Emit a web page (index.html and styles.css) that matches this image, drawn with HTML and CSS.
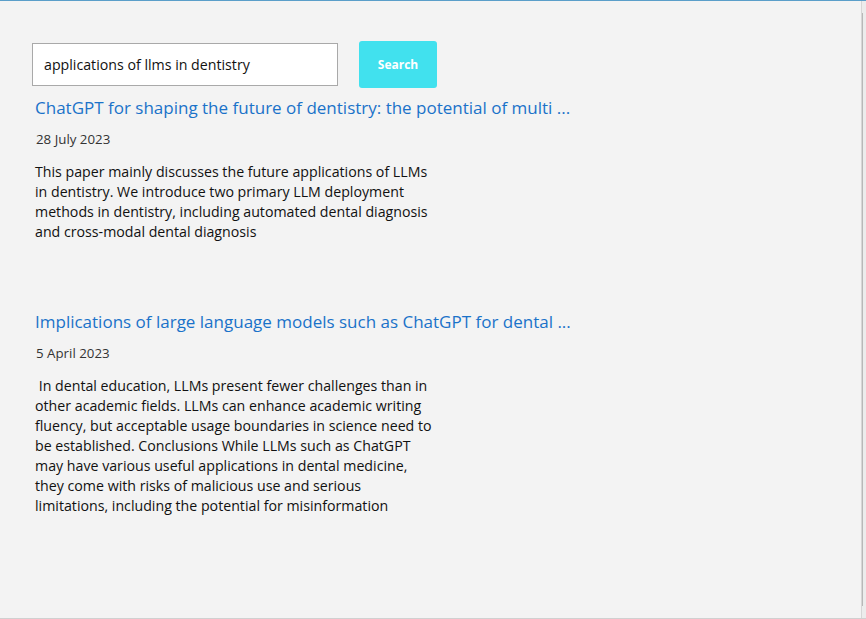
FILE: index.html
```html
<!DOCTYPE html>
<html>
<head>
<meta charset="utf-8">
<link rel="stylesheet" href="styles.css">
</head>
<body>
<div class="window">
  <main class="content">
    <form class="search">
      <input class="search-input" type="text" value="applications of llms in dentistry">
      <button class="search-btn" type="button">Search</button>
    </form>
    <article class="result">
      <a class="title" href="#">ChatGPT for shaping the future of dentistry: the potential of multi ...</a>
      <div class="date">28 July 2023</div>
      <p class="abstract">This paper mainly discusses the future applications of LLMs<br>in dentistry. We introduce two primary LLM deployment<br>methods in dentistry, including automated dental diagnosis<br>and cross-modal dental diagnosis</p>
    </article>
    <article class="result second">
      <a class="title" href="#">Implications of large language models such as ChatGPT for dental ...</a>
      <div class="date">5 April 2023</div>
      <p class="abstract">&nbsp;In dental education, LLMs present fewer challenges than in<br>other academic fields. LLMs can enhance academic writing<br>fluency, but acceptable usage boundaries in science need to<br>be established. Conclusions While LLMs such as ChatGPT<br>may have various useful applications in dental medicine,<br>they come with risks of malicious use and serious<br>limitations, including the potential for misinformation</p>
    </article>
  </main>
  <div class="scrollbar"><div class="thumb"></div></div>
</div>
</body>
</html>
```
FILE: styles.css
```css
* { box-sizing: border-box; }
html, body { margin: 0; padding: 0; height: 100%; }
body {
  background: #f3f3f3;
  font-family: "Open Sans", "Noto Sans", sans-serif;
  color: #222;
}
.window {
  display: flex;
  height: 619px;
  border-top: 1px solid #5a9ec9;
  border-bottom: 1px solid #d0d0d0;
}
.content {
  flex: 1;
  padding: 40px 0 0 32px;
  border-right: 1px solid #d6d6d6;
}
.search {
  display: flex;
  align-items: center;
  gap: 21px;
  margin: 0;
}
.search-input {
  width: 306px;
  height: 43px;
  border: 1px solid #a9a9a9;
  background: #fff;
  padding: 0 11px;
  font-family: inherit;
  font-size: 14.2px;
  color: #111;
  outline: none;
}
.search-btn {
  width: 78px;
  height: 47px;
  border: none;
  border-radius: 3px;
  background: #41e1ee;
  color: #fff;
  font-family: inherit;
  font-weight: 700;
  font-size: 12px;
  padding: 0;
}
.result {
  padding-left: 3px;
  margin-top: 8px;
}
.result.second { margin-top: 68px; }
.title {
  display: block;
  font-size: 17px;
  line-height: 24px;
  color: #1a72c9;
  text-decoration: none;
  white-space: nowrap;
}
.date {
  margin-top: 10px;
  padding-left: 1px;
  font-size: 13.3px;
  line-height: 18px;
  color: #333;
}
.abstract {
  margin: 14px 0 0;
  font-size: 14.2px;
  line-height: 20px;
  color: #111;
  white-space: nowrap;
}
.scrollbar {
  width: 4px;
  background: #ececec;
  padding: 12px 0;
}
.thumb {
  height: 100%;
  border-left: 1px solid #b8b8b8;
}
```
